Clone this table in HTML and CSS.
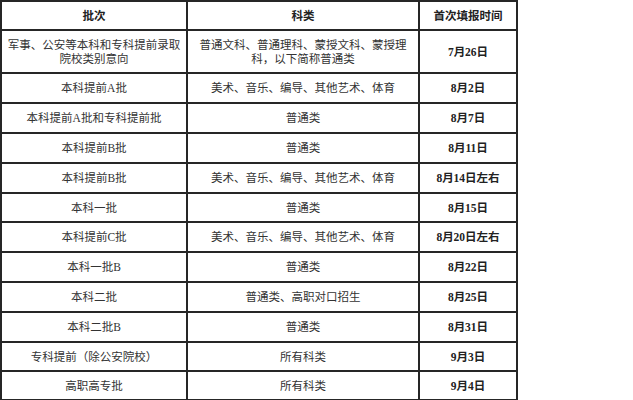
FILE: index.html
```html
<!DOCTYPE html>
<html lang="zh">
<head>
<meta charset="utf-8">
<link rel="stylesheet" href="styles.css">
</head>
<body>
<table class="schedule">
  <colgroup>
    <col class="c1"><col class="c2"><col class="c3">
  </colgroup>
  <thead>
    <tr class="r-head"><th>批次</th><th>科类</th><th>首次填报时间</th></tr>
  </thead>
  <tbody>
    <tr class="r-tall"><td>军事、公安等本科和专科提前录取<br>院校类别意向</td><td>普通文科、普通理科、蒙授文科、蒙授理<br>科，以下简称普通类</td><td class="date">7月26日</td></tr>
    <tr class="r30"><td>本科提前A批</td><td>美术、音乐、编导、其他艺术、体育</td><td class="date">8月2日</td></tr>
    <tr class="r30"><td>本科提前A批和专科提前批</td><td>普通类</td><td class="date">8月7日</td></tr>
    <tr class="r30"><td>本科提前B批</td><td>普通类</td><td class="date">8月11日</td></tr>
    <tr class="r30"><td>本科提前B批</td><td>美术、音乐、编导、其他艺术、体育</td><td class="date">8月14日左右</td></tr>
    <tr class="r29"><td>本科一批</td><td>普通类</td><td class="date">8月15日</td></tr>
    <tr class="r30"><td>本科提前C批</td><td>美术、音乐、编导、其他艺术、体育</td><td class="date">8月20日左右</td></tr>
    <tr class="r30"><td>本科一批B</td><td>普通类</td><td class="date">8月22日</td></tr>
    <tr class="r30"><td>本科二批</td><td>普通类、高职对口招生</td><td class="date">8月25日</td></tr>
    <tr class="r30"><td>本科二批B</td><td>普通类</td><td class="date">8月31日</td></tr>
    <tr class="r29"><td>专科提前（除公安院校）</td><td>所有科类</td><td class="date">9月3日</td></tr>
    <tr class="r29"><td>高职高专批</td><td>所有科类</td><td class="date">9月4日</td></tr>
  </tbody>
</table>
</body>
</html>
```

FILE: styles.css
```css
html, body {
  margin: 0;
  padding: 0;
  background: #ffffff;
}

.schedule {
  border-collapse: collapse;
  table-layout: fixed;
  width: 516px;
  margin: 0;
  font-family: "Liberation Serif", "Noto Sans CJK SC", serif;
  font-size: 11.5px;
  line-height: 14px;
  color: #333333;
}

.c1 { width: 186px; }
.c2 { width: 232px; }
.c3 { width: 98px; }

.schedule th,
.schedule td {
  border: 2px solid #262626;
  padding: 0 2px;
  text-align: center;
  vertical-align: middle;
  white-space: nowrap;
}

.schedule th {
  font-weight: bold;
  color: #222222;
}

.r-head { height: 29px; }
.r-tall { height: 43px; }
.r30 { height: 30px; }
.r29 { height: 29px; }

.date {
  font-weight: bold;
  color: #222222;
}
```
